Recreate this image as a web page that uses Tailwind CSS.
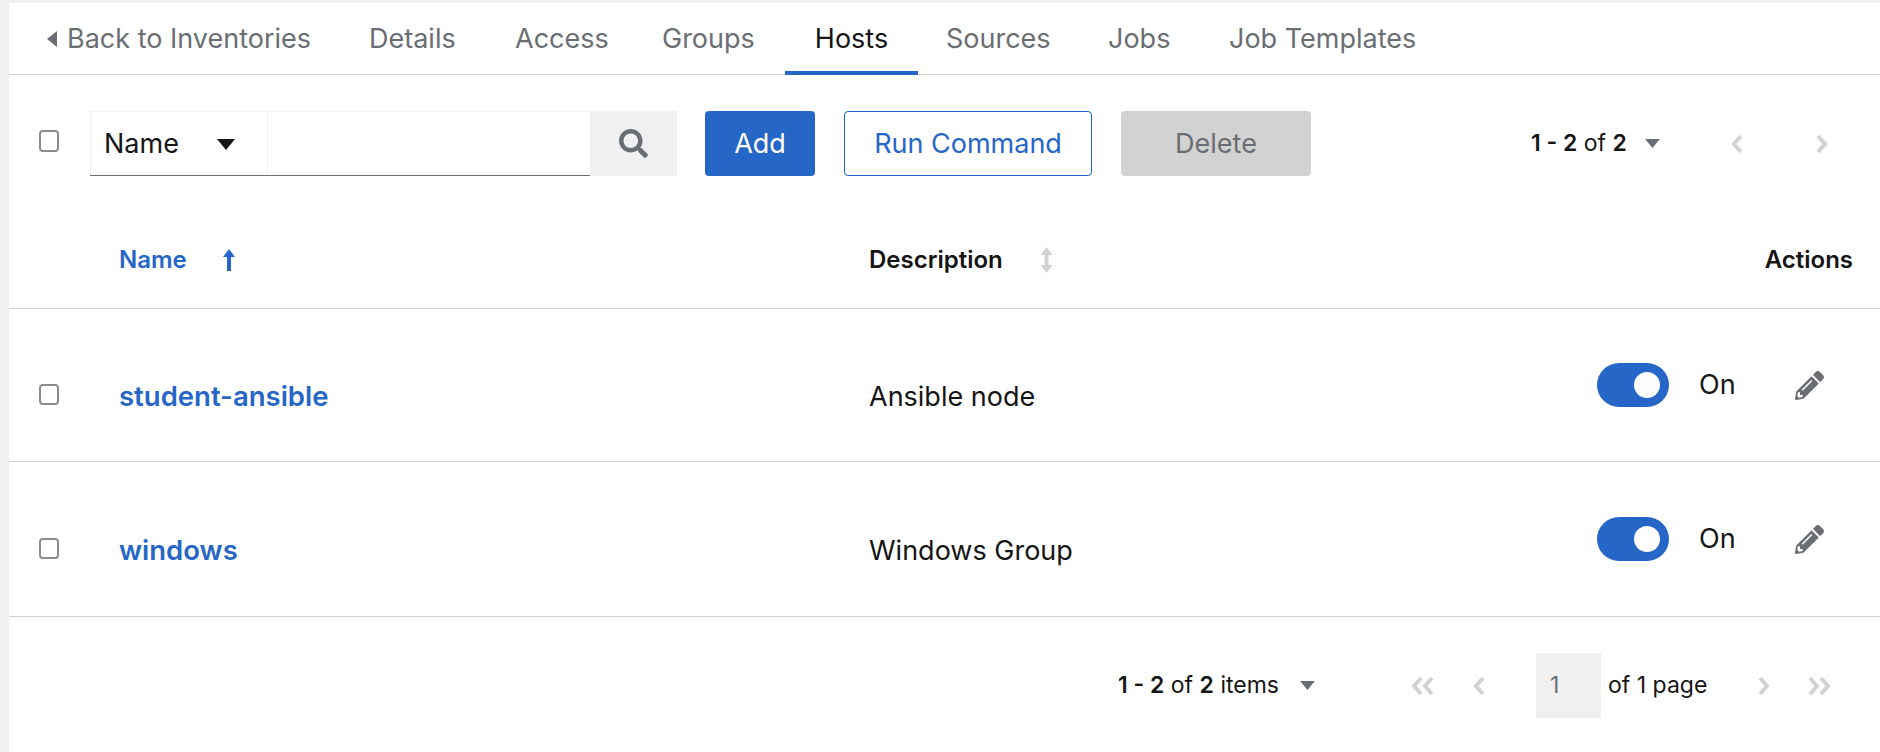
<!DOCTYPE html>
<html lang="en">
<head>
  <meta charset="UTF-8">
  <title>Hosts</title>
  <script src="https://cdn.jsdelivr.net/npm/@tailwindcss/browser@4"></script>
</head>
<body class="bg-[#f0f0f0] font-['Inter',sans-serif] text-[#151515]">
  <div class="ml-[9px] mt-[3px] h-[749px] bg-white overflow-hidden">

    <!-- Tabs -->
    <nav class="flex h-[72px] border-b border-[#d2d2d2] text-[27px] text-[#6a6e73]">
      <a class="flex items-center pl-[37px] pt-[1px] w-[360px]">
        <svg class="w-[12px] h-[18px] mr-[9px]" viewBox="0 0 12 18" fill="currentColor"><path d="M11 1v16L1 9z"/></svg>
        Back to Inventories
      </a>
      <a class="flex items-center pt-[1px] w-[146px]">Details</a>
      <a class="flex items-center pt-[1px] w-[147px]">Access</a>
      <a class="flex items-center pt-[1px] w-[123px]">Groups</a>
      <a class="flex items-center justify-center w-[133px] text-[#151515] border-b-[4px] border-[#2566c6] pt-[4px] h-[72px]">Hosts</a>
      <a class="flex items-center pl-[28px] pt-[1px] w-[190px]">Sources</a>
      <a class="flex items-center pt-[1px] w-[121px]">Jobs</a>
      <a class="flex items-center pt-[1px]">Job Templates</a>
    </nav>

    <!-- Toolbar -->
    <div class="flex items-center h-[65px] mt-[36px] pl-[30px] text-[27px]">
      <span class="w-[20px] h-[22px] border-2 border-[#8a8d90] rounded-[4px] mb-[6px]"></span>
      <div class="flex ml-[31px] h-[65px] w-[500px] border-b border-[#6a6e73]">
        <div class="flex items-center justify-between w-[177px] pl-[13px] pr-[32px] pt-[1px] border-l border-t border-[#f0f0f0]">
          Name
          <svg class="w-[18px] h-[11px]" viewBox="0 0 18 11" fill="#151515"><path d="M0 0h18L9 11z"/></svg>
        </div>
        <div class="flex-1 border-l border-t border-[#f0f0f0]"></div>
      </div>
      <button class="flex items-center justify-center w-[87px] h-[65px] bg-[#f0f0f0] text-[#6a6e73]">
        <svg class="w-[29px] h-[29px]" viewBox="0 0 512 512" fill="currentColor"><path d="M505 442.700L405.300 343c-4.500-4.500-10.600-7-17-7H372c27.600-35.300 44-79.700 44-128C416 93.100 322.900 0 208 0S0 93.100 0 208s93.100 208 208 208c48.300 0 92.700-16.400 128-44v16.300c0 6.400 2.500 12.500 7 17l99.700 99.700c9.400 9.400 24.600 9.400 33.900 0l28.300-28.300c9.400-9.400 9.400-24.600.100-34zM208 336c-70.700 0-128-57.200-128-128 0-70.700 57.200-128 128-128 70.700 0 128 57.200 128 128 0 70.700-57.200 128-128 128z"/></svg>
      </button>
      <button class="w-[110px] h-[65px] ml-[28px] pt-[1px] bg-[#2566c6] text-white rounded-[4px]">Add</button>
      <button class="w-[248px] h-[65px] ml-[29px] pt-[1px] bg-white text-[#2566c6] border border-[#2566c6] rounded-[4px]">Run Command</button>
      <button class="w-[190px] h-[65px] ml-[29px] pt-[1px] bg-[#d2d2d2] text-[#6a6e73] rounded-[4px]">Delete</button>
      <div class="flex items-center w-[141px] ml-[220px] text-[#151515] text-[23px]">
        <span class="w-[106px] whitespace-nowrap"><b class="font-semibold">1 - 2</b> of <b class="font-semibold">2</b></span>
        <svg class="w-[15px] h-[9px] ml-[8px]" viewBox="0 0 18 11" fill="#6a6e73"><path d="M0 0h18L9 11z"/></svg>
      </div>
      <svg class="w-[13px] h-[20px] ml-[58px]" viewBox="0 0 13 20" fill="none" stroke="#d2d2d2" stroke-width="4"><path d="M11 2L4 10l7 8"/></svg>
      <svg class="w-[13px] h-[20px] ml-[73px]" viewBox="0 0 13 20" fill="none" stroke="#d2d2d2" stroke-width="4"><path d="M2 2l7 8-7 8"/></svg>
    </div>

    <!-- Table head -->
    <div class="grid grid-cols-[110px_750px_1fr] items-center h-[133px] pt-[36px] border-b border-[#d2d2d2] text-[24px] font-semibold">
      <span></span>
      <div class="flex items-center text-[#2566c6]">
        <span class="w-[103px]">Name</span>
        <svg class="w-[14px] h-[22px]" viewBox="0 0 14 22" fill="currentColor"><path d="M7 0l6 8H9v14H5V8H1z"/></svg>
      </div>
      <div class="flex items-center">
        <span class="w-[171px]">Description</span>
        <svg class="w-[13px] h-[26px]" viewBox="0 0 13 26" fill="#d2d2d2"><path d="M6.500 0l6 8H8.500v10h4l-6 8-6-8h4V8H.5z"/></svg>
        <span class="ml-auto pr-[27px]">Actions</span>
      </div>
    </div>

    <!-- Rows -->
    <div class="grid grid-cols-[110px_750px_1fr] items-center h-[153px] pt-[24px] border-b border-[#d2d2d2] text-[27px]">
      <span class="ml-[30px] w-[20px] h-[21px] border-2 border-[#8a8d90] rounded-[4px] mb-[6px]"></span>
      <a class="font-semibold text-[#2566c6] text-[27.500px]">student-ansible</a>
      <div class="flex items-center">
        Ansible node
        <div class="flex items-center ml-auto mb-[24px]">
          <span class="flex items-center justify-end w-[72px] h-[44px] pr-[9px] rounded-full bg-[#2566c6]"><span class="w-[26px] h-[26px] rounded-full bg-white"></span></span>
          <span class="ml-[30px] w-[96px]">On</span>
          <svg class="w-[29px] h-[29px] mr-[56px]" viewBox="0 0 512 512" fill="#6a6e73"><path d="M497.900 142.100l-46.100 46.100c-4.700 4.700-12.300 4.700-17 0l-111-111c-4.700-4.700-4.700-12.300 0-17l46.100-46.100c18.700-18.700 49.100-18.700 67.900 0l60.100 60.100c18.800 18.700 18.800 49.100 0 67.900zM284.200 99.800L21.600 362.400.4 483.900c-2.900 16.400 11.400 30.600 27.800 27.800l121.500-21.300 262.600-262.600c4.700-4.700 4.700-12.300 0-17l-111-111c-4.800-4.700-12.400-4.700-17.100 0zM124.100 339.900c-5.500-5.500-5.500-14.300 0-19.800l154-154c5.500-5.500 14.300-5.500 19.800 0s5.500 14.300 0 19.800l-154 154c-5.500 5.500-14.300 5.500-19.800 0zM88 424h48v36.300l-64.500 11.300-31.100-31.100L51.700 376H88v48z"/></svg>
        </div>
      </div>
    </div>
    <div class="grid grid-cols-[110px_750px_1fr] items-center h-[155px] pt-[24px] border-b border-[#d2d2d2] text-[27px]">
      <span class="ml-[30px] w-[20px] h-[21px] border-2 border-[#8a8d90] rounded-[4px] mb-[6px]"></span>
      <a class="font-semibold text-[#2566c6] text-[27.500px]">windows</a>
      <div class="flex items-center">
        Windows Group
        <div class="flex items-center ml-auto mb-[24px]">
          <span class="flex items-center justify-end w-[72px] h-[44px] pr-[9px] rounded-full bg-[#2566c6]"><span class="w-[26px] h-[26px] rounded-full bg-white"></span></span>
          <span class="ml-[30px] w-[96px]">On</span>
          <svg class="w-[29px] h-[29px] mr-[56px]" viewBox="0 0 512 512" fill="#6a6e73"><path d="M497.900 142.100l-46.100 46.100c-4.700 4.700-12.300 4.700-17 0l-111-111c-4.700-4.700-4.700-12.300 0-17l46.100-46.100c18.700-18.700 49.100-18.700 67.900 0l60.100 60.100c18.800 18.700 18.800 49.100 0 67.900zM284.200 99.800L21.600 362.400.4 483.900c-2.900 16.400 11.400 30.600 27.800 27.800l121.500-21.300 262.600-262.600c4.700-4.700 4.700-12.300 0-17l-111-111c-4.800-4.700-12.400-4.700-17.100 0zM124.100 339.900c-5.500-5.500-5.500-14.300 0-19.800l154-154c5.500-5.500 14.300-5.500 19.800 0s5.500 14.300 0 19.800l-154 154c-5.500 5.500-14.300 5.500-19.800 0zM88 424h48v36.300l-64.500 11.300-31.100-31.100L51.700 376H88v48z"/></svg>
        </div>
      </div>
    </div>

    <!-- Footer pagination -->
    <div class="flex items-center h-[65px] mt-[36px] pl-[1109px] text-[23px]">
      <span class="w-[163px] whitespace-nowrap"><b class="font-semibold">1 - 2</b> of <b class="font-semibold">2</b> items</span>
      <svg class="w-[15px] h-[9px] ml-[19px]" viewBox="0 0 18 11" fill="#6a6e73"><path d="M0 0h18L9 11z"/></svg>
      <svg class="w-[24px] h-[20px] ml-[95px]" viewBox="0 0 24 20" fill="none" stroke="#d2d2d2" stroke-width="4"><path d="M11 2L4 10l7 8M22 2l-7 8 7 8"/></svg>
      <svg class="w-[13px] h-[20px] ml-[38px]" viewBox="0 0 13 20" fill="none" stroke="#d2d2d2" stroke-width="4"><path d="M11 2L4 10l7 8"/></svg>
      <span class="flex items-center w-[65px] h-[65px] ml-[51px] pl-[14px] bg-[#f0f0f0] text-[#6a6e73]">1</span>
      <span class="ml-[7px] w-[99px] whitespace-nowrap">of 1 page</span>
      <svg class="w-[13px] h-[20px] ml-[51px]" viewBox="0 0 13 20" fill="none" stroke="#d2d2d2" stroke-width="4"><path d="M2 2l7 8-7 8"/></svg>
      <svg class="w-[24px] h-[20px] ml-[37px]" viewBox="0 0 24 20" fill="none" stroke="#d2d2d2" stroke-width="4"><path d="M2 2l7 8-7 8M13 2l7 8-7 8"/></svg>
    </div>
  </div>
</body>
</html>
